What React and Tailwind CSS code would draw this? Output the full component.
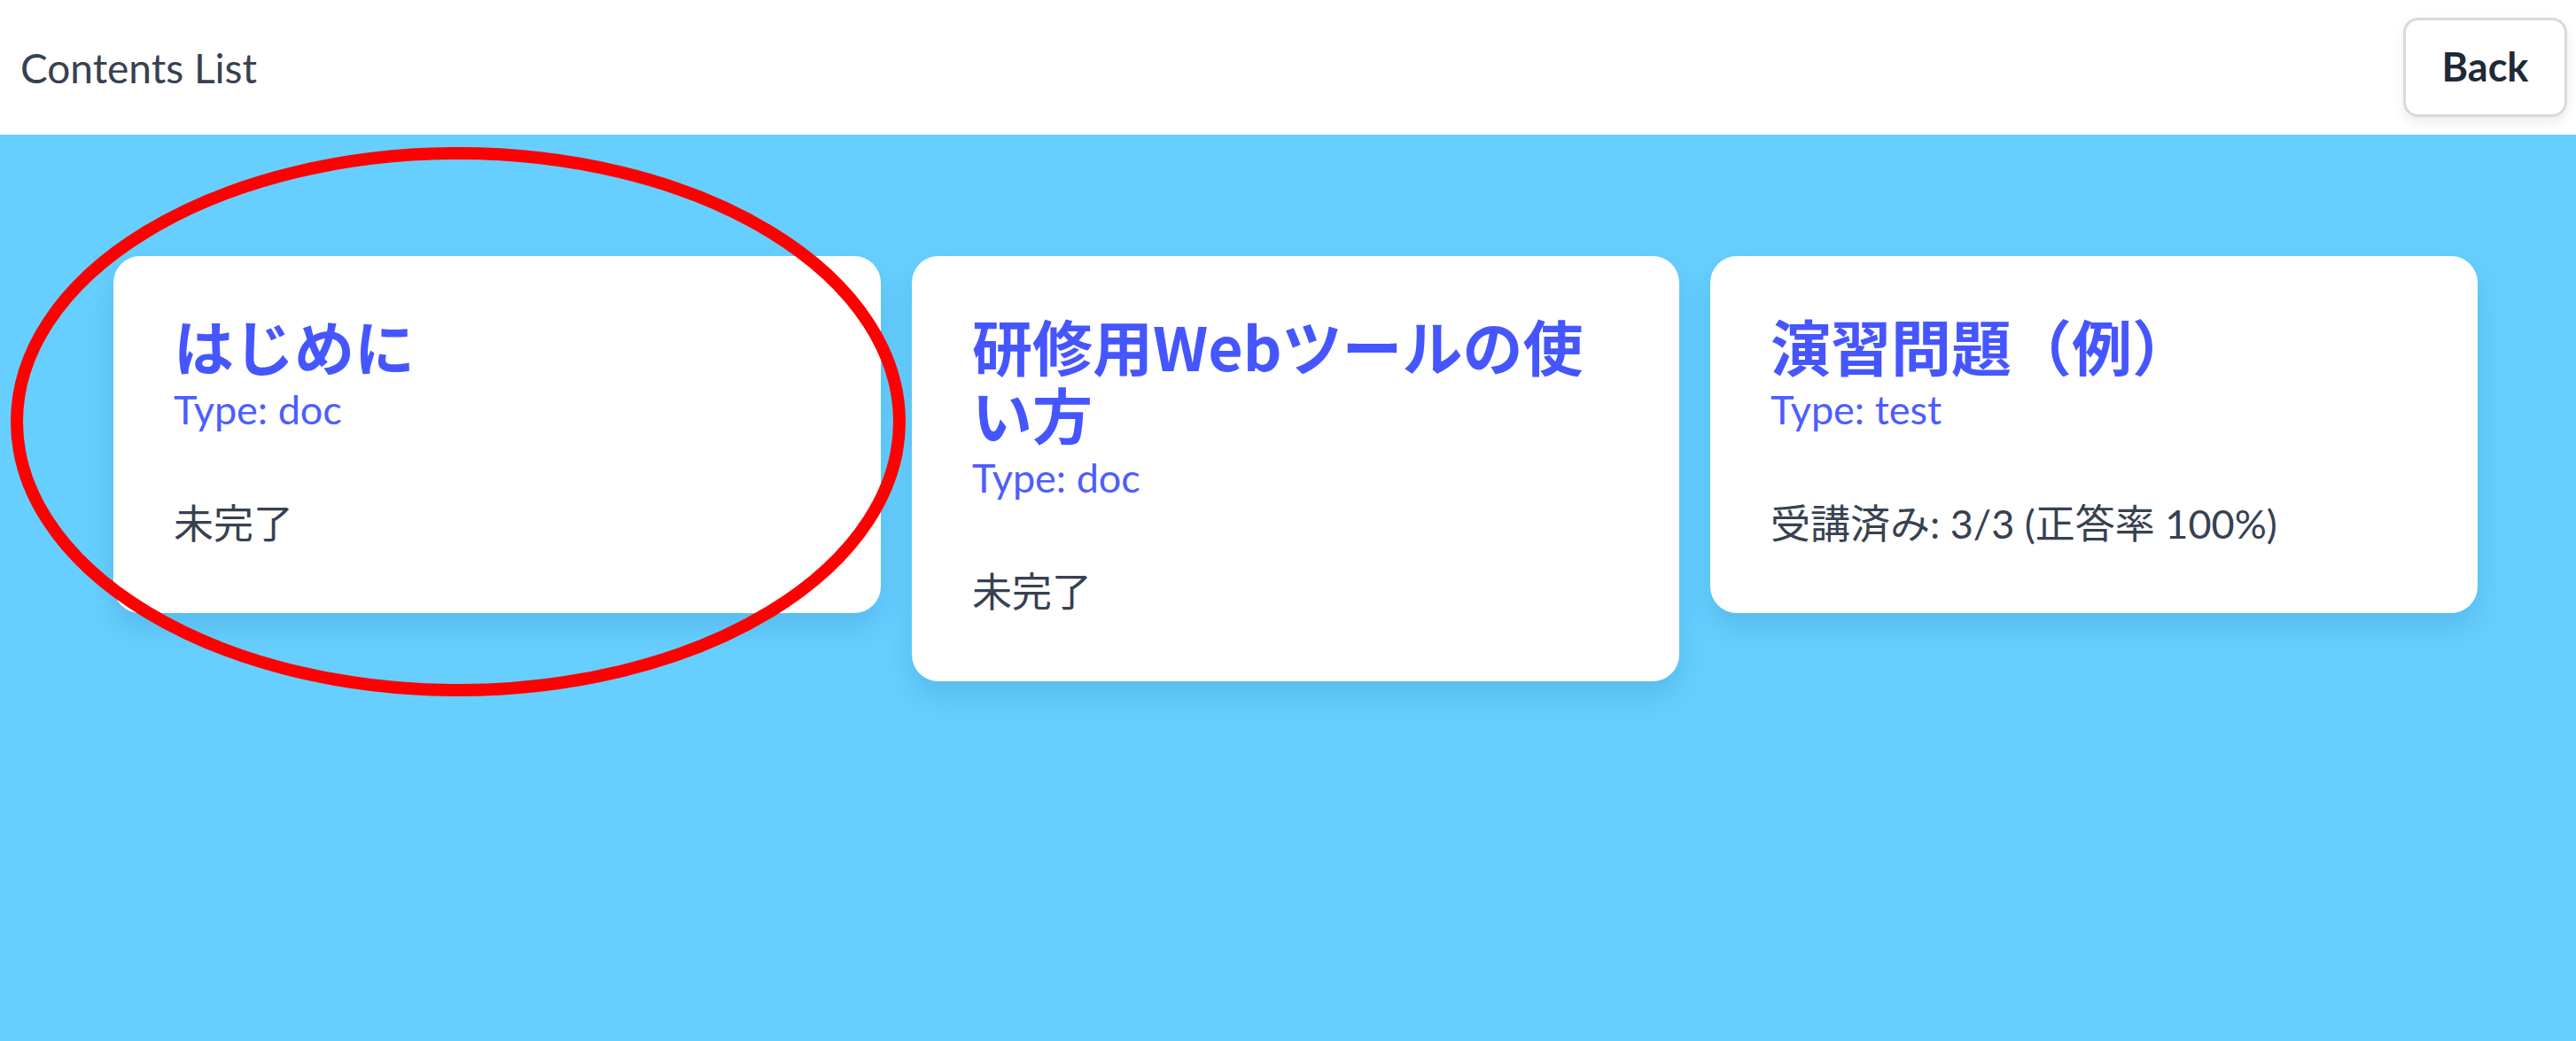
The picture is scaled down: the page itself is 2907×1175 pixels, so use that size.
import React from 'react'

/**
 * Contents List - course contents as cards on a sky-blue page
 * The red ring is a hand-drawn annotation lying over the first card
 */

const CONTENTS = [
  { id: 1, title: 'はじめに', type: 'doc', status: '未完了' },
  { id: 2, title: '研修用Webツールの使い方', type: 'doc', status: '未完了' },
  { id: 3, title: '演習問題（例）', type: 'test', status: '受講済み: 3/3 (正答率 100%)' },
]

const latin = { fontFamily: 'Lato, "Noto Sans CJK JP", sans-serif' }
const cjk = { fontFamily: '"Noto Sans CJK JP", "Noto Sans", sans-serif' }

function ContentCard({ item }) {
  return (
    <div className="w-[866px] shrink-0 rounded-[30px] bg-white pl-[68px] pr-[78px] pt-[62px] pb-[71px] shadow-[0_16px_30px_rgba(30,120,170,0.22)]">
      <h2 className="text-[68px] leading-[77px] font-bold text-[#4556ff]" style={cjk}>
        {item.title}
      </h2>
      <p className="mt-[4px] text-[45px] leading-[60px] text-[#4d5dff]" style={latin}>
        Type: {item.type}
      </p>
      <p className="mt-[69px] text-[45px] leading-[60px] text-[#374151]" style={latin}>
        {item.status}
      </p>
    </div>
  )
}

export default function App() {
  return (
    <main className="relative min-h-screen bg-[#66cfff]">
      {/* Header */}
      <header className="flex h-[152px] items-center justify-between bg-white pl-[23px] pr-[10px]">
        <span className="text-[46px] text-[#374151]" style={latin}>Contents List</span>
        <button
          className="flex h-[112px] w-[185px] items-center justify-center rounded-[17px] border-[3px] border-[#d6d9e0] bg-white text-[45px] font-bold text-[#1f2937] shadow-[0_6px_14px_rgba(0,0,0,0.08)]"
          style={latin}
        >
          Back
        </button>
      </header>

      {/* Cards */}
      <section className="flex items-start gap-[35px] pl-[128px] pt-[137px]">
        {CONTENTS.map((item) => (
          <ContentCard key={item.id} item={item} />
        ))}
      </section>

      {/* Annotation ring */}
      <svg
        className="pointer-events-none absolute left-0 top-0"
        width="1040"
        height="800"
        viewBox="0 0 1040 800"
        aria-hidden="true"
      >
        <ellipse cx="517" cy="476" rx="498" ry="303" fill="none" stroke="#ff0000" strokeWidth="14" />
      </svg>
    </main>
  )
}
